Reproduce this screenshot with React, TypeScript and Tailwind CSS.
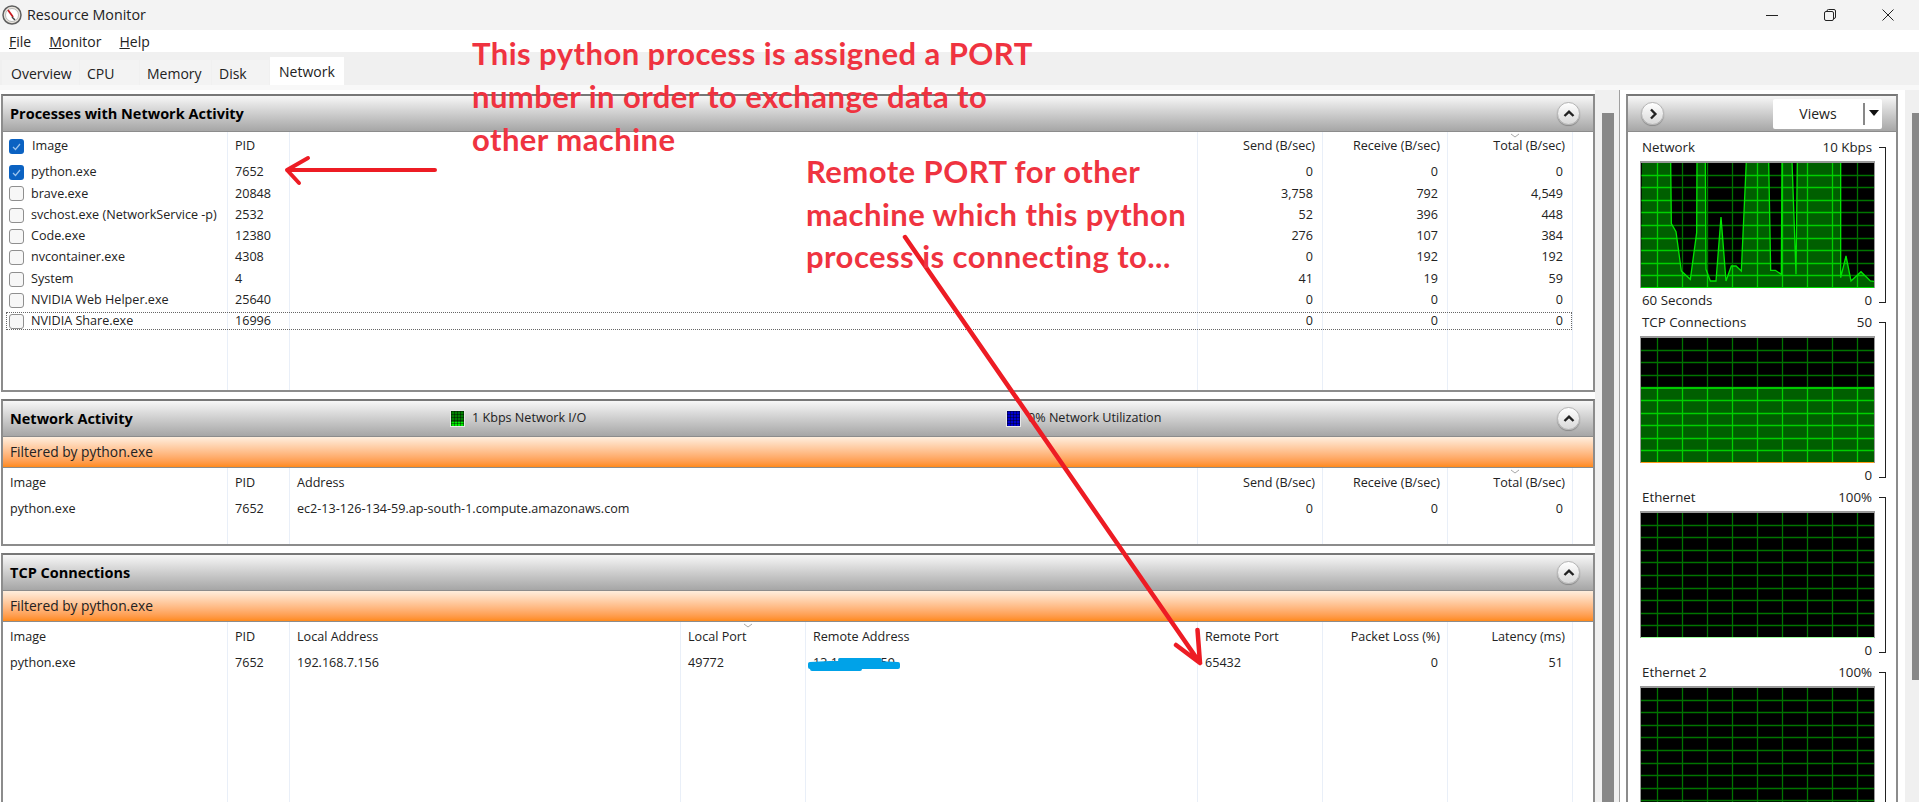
import React from "react";

type Col = {
  title: string;
  width: string;
  right?: boolean;
  sorted?: boolean;
  values: string[];
};

const processes = [
  { name: "python.exe", checked: true },
  { name: "brave.exe" },
  { name: "svchost.exe (NetworkService -p)" },
  { name: "Code.exe" },
  { name: "nvcontainer.exe" },
  { name: "System" },
  { name: "NVIDIA Web Helper.exe" },
  { name: "NVIDIA Share.exe" },
];

const processCols: Col[] = [
  { title: "PID", width: "w-[62px]", values: ["7652", "20848", "2532", "12380", "4308", "4", "25640", "16996"] },
  { title: "", width: "w-[908px]", values: [] },
  { title: "Send (B/sec)", width: "w-[125px]", right: true, values: ["0", "3,758", "52", "276", "0", "41", "0", "0"] },
  { title: "Receive (B/sec)", width: "w-[125px]", right: true, values: ["0", "792", "396", "107", "192", "19", "0", "0"] },
  { title: "Total (B/sec)", width: "w-[125px]", right: true, sorted: true, values: ["0", "4,549", "448", "384", "192", "59", "0", "0"] },
];

const activityCols: Col[] = [
  { title: "Image", width: "w-[225px]", values: ["python.exe"] },
  { title: "PID", width: "w-[62px]", values: ["7652"] },
  { title: "Address", width: "w-[908px]", values: ["ec2-13-126-134-59.ap-south-1.compute.amazonaws.com"] },
  { title: "Send (B/sec)", width: "w-[125px]", right: true, values: ["0"] },
  { title: "Receive (B/sec)", width: "w-[125px]", right: true, values: ["0"] },
  { title: "Total (B/sec)", width: "w-[125px]", right: true, sorted: true, values: ["0"] },
];

const tcpCols: Col[] = [
  { title: "Image", width: "w-[225px]", values: ["python.exe"] },
  { title: "PID", width: "w-[62px]", values: ["7652"] },
  { title: "Local Address", width: "w-[391px]", values: ["192.168.7.156"] },
  { title: "Local Port", width: "w-[125px]", sorted: true, values: ["49772"] },
  { title: "Remote Address", width: "w-[392px]", values: ["13.126.134.59"] },
  { title: "Remote Port", width: "w-[125px]", values: ["65432"] },
  { title: "Packet Loss (%)", width: "w-[125px]", right: true, values: ["0"] },
  { title: "Latency (ms)", width: "w-[125px]", right: true, values: ["51"] },
];

// traced from the graph, in 3x crop coordinates
const networkPoints = [
  [240, 480], [326, 480], [328, 668], [342, 692], [358, 810], [385, 835], [404, 695], [405, 480],
  [430, 480], [432, 805], [445, 840], [462, 840], [477, 648], [492, 840], [508, 795], [522, 795],
  [538, 810], [553, 480], [620, 480], [626, 808], [640, 808], [658, 820], [660, 480], [690, 480],
  [702, 820], [706, 480], [836, 480], [836, 830], [852, 765], [867, 840], [897, 812], [925, 840], [942, 842],
].map(([x, y]) => [(x - 240) / 3 + 1, (y - 480) / 3]);

const vLines = Array.from({ length: 10 }, (_, i) => 16 + i * 25);
const hLines = Array.from({ length: 10 }, (_, i) => 13.5 + i * 12.6);

const GridLines = ({ color }: { color: string }) => (
  <g stroke={color} strokeWidth="1.3">
    {vLines.map((x) => (
      <line key={x} x1={x + 0.5} y1="0" x2={x + 0.5} y2="127" />
    ))}
    {hLines.map((y) => (
      <line key={y} x1="0" y1={Math.round(y) + 0.5} x2="235" y2={Math.round(y) + 0.5} />
    ))}
  </g>
);

const Graph = ({ id, points, baseline }: { id: string; points?: number[][]; baseline: string }) => {
  const area = points ? [...points, [235, 126], [0, 126]] : null;
  const poly = area ? area.map((p) => p.join(",")).join(" ") : "";
  return (
    <div className="h-[127px] w-[235px] border-t-2 border-l border-r border-[#9a9a9a]">
      <svg width="233" height="125" viewBox="0 2 233 125" className="block">
        <rect x="0" y="0" width="235" height="127" fill="#000" />
        <GridLines color="#007400" />
        {area && (
          <>
            <clipPath id={id}>
              <polygon points={poly} />
            </clipPath>
            <polygon points={poly} fill="#005f00" />
            <g clipPath={`url(#${id})`}>
              <GridLines color="#00d000" />
            </g>
            <polyline
              points={points!.map((p) => p.join(",")).join(" ")}
              fill="none"
              stroke="#00e600"
              strokeWidth="1.3"
            />
          </>
        )}
        <line x1="0" y1="126.5" x2="235" y2="126.5" stroke={baseline} strokeWidth="1" />
      </svg>
    </div>
  );
};

const GraphBlock = (props: {
  id: string;
  title: string;
  top: string;
  bottomLeft?: string;
  points?: number[][];
  baseline: string;
  noFoot?: boolean;
}) => (
  <div className="flex h-[175px] shrink-0 text-[#222]">
    <div className="w-[235px]">
      <div className="flex h-[25px] items-center justify-between pl-[2px] pr-[3px] pb-[1px]">
        <span>{props.title}</span>
        <span>{props.top}</span>
      </div>
      <Graph id={props.id} points={props.points} baseline={props.baseline} />
      {!props.noFoot && (
        <div className="flex h-[23px] items-center justify-between pl-[2px] pr-[3px] pt-[3px]">
          <span>{props.bottomLeft}</span>
          <span>0</span>
        </div>
      )}
    </div>
    <div className="mt-[11px] ml-[4px] h-[156px] w-[7px] border-t border-r border-b border-[#222]" />
  </div>
);

const RoundButton = ({ dir }: { dir: "up" | "right" }) => (
  <div className="flex h-[23px] w-[23px] items-center justify-center rounded-full border border-[#b5b5b5] bg-gradient-to-b from-white to-[#d9d9d9] shadow-[0_1px_1px_#8a8a8a]">
    <svg width="12" height="12" viewBox="0 0 12 12" fill="none" stroke="#222" strokeWidth="2.4">
      {dir === "up" ? <path d="M1.5 8 L6 3.6 L10.5 8" /> : <path d="M4 1.5 L8.4 6 L4 10.5" />}
    </svg>
  </div>
);

const PanelHeader = ({ title, children }: { title: string; children?: React.ReactNode }) => (
  <div className="flex h-[36px] shrink-0 items-center justify-between border-b border-[#8c8c8c] bg-gradient-to-b from-[#f7f7f7] to-[#a6a6a6] pl-[7px] pr-[13px]">
    <div className="flex items-center">
      <span className="w-[440px] text-[14.5px] font-bold text-black">{title}</span>
      {children}
    </div>
    <RoundButton dir="up" />
  </div>
);

const FilterBar = () => (
  <div className="flex h-[31px] shrink-0 items-center border-b border-[#8c8c8c] bg-gradient-to-b from-[#ffeedd] to-[#ff8a17] pl-[7px] text-[13.8px] text-[#222]">
    Filtered by python.exe
  </div>
);

const Legend = ({ width, bar, fill, label }: { width: string; bar: string; fill: string; label: string }) => (
  <div className={`flex items-center gap-[7px] text-[12.6px] text-[#222] ${width}`}>
    <div className={`relative h-[17px] w-[15px] border border-[#e8e8e8] ${fill}`}>
      <div className={`absolute inset-x-0 bottom-0 h-[4px] ${bar}`} />
      <div className="absolute inset-0 bg-[linear-gradient(#00000066_1px,transparent_1px),linear-gradient(90deg,#00000066_1px,transparent_1px)] bg-[length:3px_3px]" />
    </div>
    <span>{label}</span>
  </div>
);

const SortMark = () => (
  <svg width="10" height="5" viewBox="0 0 10 5" className="absolute top-[1px] left-1/2" fill="none" stroke="#a8a8a8">
    <path d="M1 1 L5 4 L9 1" />
  </svg>
);

const Column = ({ col, head = "h-[31px]" }: { col: Col; head?: string }) => (
  <div className={`h-full shrink-0 border-r border-[#e9eff8] ${col.width}`}>
    <div className={`relative flex items-center ${head} ${col.right ? "justify-end pr-[7px]" : "pl-[7px]"}`}>
      {col.sorted && <SortMark />}
      {col.title}
    </div>
    {col.values.map((v, i) => (
      <div key={i} className={`flex h-[21.3px] items-center ${col.right ? "justify-end pr-[9px]" : "pl-[7px]"}`}>
        {v}
      </div>
    ))}
  </div>
);

const Check = ({ on }: { on?: boolean }) =>
  on ? (
    <div className="flex h-[15px] w-[15px] items-center justify-center rounded-[3px] bg-[#0b62c2]">
      <svg width="11" height="11" viewBox="0 0 11 11" fill="none" stroke="#9cc4ee" strokeWidth="1.2">
        <path d="M2 6 L4.5 8.5 L9 3" />
      </svg>
    </div>
  ) : (
    <div className="h-[15px] w-[15px] rounded-[3px] border border-[#8f8f8f] bg-[#f7f7f7]" />
  );

const ImageColumn = () => (
  <div className="h-full w-[225px] shrink-0 border-r border-[#e9eff8]">
    <div className="flex h-[30px] items-center gap-[8px] pb-[1px] pl-[6px]">
      <Check on />
      Image
    </div>
    {processes.map((p) => (
      <div key={p.name} className="flex h-[21.3px] items-center gap-[7px] pl-[6px] whitespace-nowrap">
        <Check on={p.checked} />
        {p.name}
      </div>
    ))}
  </div>
);

const Tab = ({ label, width, pad, active }: { label: string; width: string; pad: string; active?: boolean }) => (
  <div
    className={`flex items-center ${pad} ${width} ${
      active ? "mt-[5px] h-[28px] bg-white" : "mt-[8px] h-[25px] bg-[#f3f3f3] pt-[1px]"
    }`}
  >
    {label}
  </div>
);

const MenuItem = ({ first, rest }: { first: string; rest: string }) => (
  <span>
    <span className="underline">{first}</span>
    {rest}
  </span>
);

const Scrollbar = ({ thumb }: { thumb: string }) => (
  <div className="ml-[7px] w-[12px] shrink-0 pt-[23px]">
    <div className={`w-[12px] bg-[#888] ${thumb}`} />
  </div>
);

const AppIcon = () => (
  <svg width="20" height="20" viewBox="0 0 20 20">
    <circle cx="10" cy="10" r="9" fill="#e8e4dc" stroke="#5f5f5f" strokeWidth="1.5" />
    <circle cx="10" cy="10" r="6.5" fill="#fff" stroke="#b8b8b8" />
    <path d="M6 5 L11 12" stroke="#c8191f" strokeWidth="1.8" />
    <path d="M10 12 L13 15" stroke="#444" strokeWidth="1.5" />
  </svg>
);

export default function App() {
  return (
    <div className="relative flex h-[802px] w-[1919px] flex-col overflow-hidden bg-[#f0f0f0] font-['Open_Sans',sans-serif] text-[12.6px] text-[#222]">
      {/* Title bar */}
      <div className="flex h-[30px] shrink-0 items-center justify-between bg-[#f3f3f3] pl-[2px]">
        <div className="flex items-center gap-[5px] text-[14.3px]">
          <AppIcon />
          Resource Monitor
        </div>
        <div className="flex items-center gap-[46px] pr-[25px]">
          <svg width="12" height="12" viewBox="0 0 12 12" stroke="#222" fill="none">
            <path d="M0 6.5 H12" />
          </svg>
          <svg width="12" height="12" viewBox="0 0 12 12" stroke="#222" fill="none">
            <rect x="0.5" y="2.5" width="9" height="9" rx="1.5" />
            <path d="M3 2.5 V2 a1.5 1.5 0 0 1 1.5 -1.5 H10 a1.5 1.5 0 0 1 1.5 1.5 V8 a1.5 1.5 0 0 1 -1.5 1.5 H9.5" />
          </svg>
          <svg width="12" height="12" viewBox="0 0 12 12" stroke="#222" fill="none">
            <path d="M0.5 0.5 L11.5 11.5 M11.5 0.5 L0.5 11.5" />
          </svg>
        </div>
      </div>

      {/* Menu */}
      <div className="flex h-[22px] shrink-0 items-center gap-[18px] bg-white pl-[9px] text-[14px]">
        <MenuItem first="F" rest="ile" />
        <MenuItem first="M" rest="onitor" />
        <MenuItem first="H" rest="elp" />
      </div>

      {/* Tabs */}
      <div className="flex h-[33px] shrink-0 gap-[1px] pl-[2px] text-[14px]">
        <Tab label="Overview" width="w-[77px]" pad="pl-[9px]" />
        <Tab label="CPU" width="w-[59px]" pad="pl-[7px]" />
        <Tab label="Memory" width="w-[71px]" pad="pl-[7px]" />
        <Tab label="Disk" width="w-[57px]" pad="pl-[7px]" />
        <Tab label="Network" width="w-[74px]" pad="pl-[9px]" active />
      </div>

      <div className="flex min-h-0 flex-1 border-t-[5px] border-[#f8f8f8]">
        {/* Left panels */}
        <div className="flex w-[1595px] shrink-0 flex-col gap-[7px] bg-white pt-[4px] pl-[1px]">
          <div className="relative flex h-[298px] shrink-0 flex-col border-2 border-[#8c8c8c] border-t-[#777]">
            <PanelHeader title="Processes with Network Activity" />
            <div className="relative flex min-h-0 flex-1 bg-white">
              <ImageColumn />
              {processCols.map((c) => (
                <Column key={c.title || "desc"} col={c} head="h-[30px] pb-[1px]" />
              ))}
              <div className="absolute top-[180px] left-[3px] h-[18px] w-[1566px] border border-dotted border-[#666]" />
            </div>
          </div>

          <div className="flex h-[147px] shrink-0 flex-col border-2 border-[#8c8c8c] border-t-[#777]">
            <PanelHeader title="Network Activity">
              <Legend width="w-[556px]" fill="bg-[#008000]" bar="bg-[#00ee00]" label="1 Kbps Network I/O" />
              <Legend width="w-[200px]" fill="bg-[#0000d0]" bar="bg-[#0000d0]" label="0% Network Utilization" />
            </PanelHeader>
            <FilterBar />
            <div className="flex min-h-0 flex-1 bg-white">
              {activityCols.map((c) => (
                <Column key={c.title} col={c} />
              ))}
            </div>
          </div>

          <div className="flex h-[260px] shrink-0 flex-col border-2 border-[#8c8c8c] border-t-[#777]">
            <PanelHeader title="TCP Connections" />
            <FilterBar />
            <div className="flex min-h-0 flex-1 bg-white">
              {tcpCols.map((c) => (
                <Column key={c.title} col={c} />
              ))}
            </div>
          </div>
        </div>

        <Scrollbar thumb="h-[700px]" />

        {/* Right column */}
        <div className="ml-[5px] w-[1px] shrink-0 bg-[#a0a0a0]" />
        <div className="flex w-[280px] shrink-0 bg-white pt-[4px] pl-[6px]">
          <div className="flex h-[760px] w-[272px] shrink-0 flex-col overflow-hidden border-2 border-[#8c8c8c] border-t-[#777]">
            <div className="flex h-[36px] shrink-0 items-center justify-between border-b border-[#8c8c8c] bg-gradient-to-b from-[#f7f7f7] to-[#a6a6a6] pr-[14px] pl-[13px]">
              <RoundButton dir="right" />
              <div className="flex h-[30px] w-[109px] items-center rounded-[2px] bg-white text-[14px]">
                <span className="w-[90px] text-center">Views</span>
                <div className="h-[22px] w-[2px] bg-[#888]" />
                <svg width="12" height="7" viewBox="0 0 12 7" className="ml-[3px]">
                  <path d="M1 0 H11 L6 6 Z" fill="#111" />
                </svg>
              </div>
            </div>
            <div className="flex flex-col bg-white pt-[4px] pl-[12px] text-[13.3px]">
              <GraphBlock id="net" title="Network" top="10 Kbps" bottomLeft="60 Seconds" points={networkPoints} baseline="#00e000" />
              <GraphBlock id="tcp" title="TCP Connections" top="50" points={[[0, 52], [235, 52]]} baseline="#ff9a1a" />
              <GraphBlock id="eth" title="Ethernet" top="100%" baseline="#9cff9c" />
              <GraphBlock id="eth2" title="Ethernet 2" top="100%" baseline="#9cff9c" noFoot />
            </div>
          </div>
        </div>
        <div className="w-[5px] shrink-0 bg-white" />
        <Scrollbar thumb="h-[567px]" />
      </div>

      {/* Annotations drawn over the screenshot */}
      <svg className="pointer-events-none absolute inset-0" width="1919" height="802" fill="none" stroke="#ed1c24" strokeWidth="4" strokeLinecap="round" strokeLinejoin="round">
        <path d="M435 170 H287 M308 158 L287 170 L299 183" />
        <path d="M905 237 L1200 663 M1176 645 L1200 663 L1197.5 630" strokeWidth="4.5" />
        <path d="M810 664 L850 662 L898 664 L898 667 L810 667 Z M840 660 L880 660 M812 669 L860 669" stroke="#00a2e8" fill="#00a2e8" strokeWidth="4" />
      </svg>
      <div className="absolute top-[32px] left-[472px] font-['Lato',sans-serif] text-[31px] leading-[43px] font-bold tracking-[0.45px] text-[#ef3340]">
        This python process is assigned a PORT
        <br />
        number in order to exchange data to
        <br />
        other machine
      </div>
      <div className="absolute top-[150px] left-[806px] font-['Lato',sans-serif] text-[31px] leading-[42.5px] font-bold tracking-[0.45px] text-[#ef3340]">
        Remote PORT for other
        <br />
        machine which this python
        <br />
        process is connecting to...
      </div>
    </div>
  );
}
